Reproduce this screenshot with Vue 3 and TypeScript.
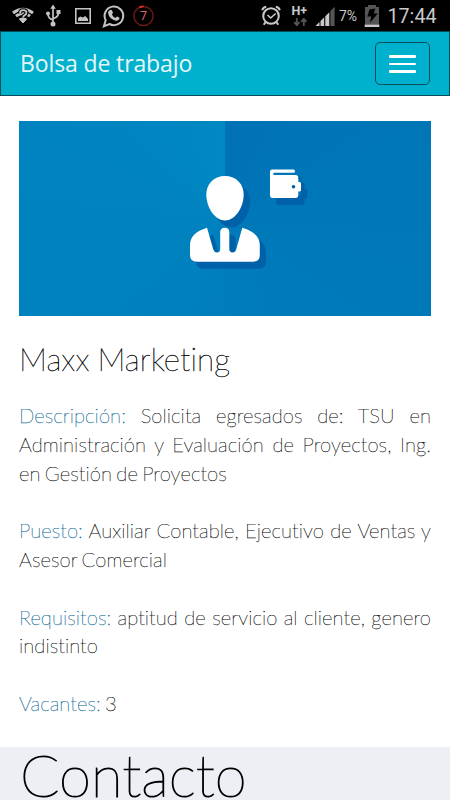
<script setup lang="ts">
interface Detail {
  label: string
  text: string
}

const details: Detail[] = [
  {
    label: 'Descripción:',
    text: 'Solicita egresados de: TSU en Administración y Evaluación de Proyectos, Ing. en Gestión de Proyectos',
  },
  { label: 'Puesto:', text: 'Auxiliar Contable, Ejecutivo de Ventas y Asesor Comercial' },
  { label: 'Requisitos:', text: 'aptitud de servicio al cliente, genero indistinto' },
  { label: 'Vacantes:', text: '3' },
]
</script>

<template>
  <div class="screen">
    <div class="status">
      <svg class="status-icons" width="160" height="31" viewBox="0 0 160 31" aria-hidden="true">
        <g fill="none" stroke="#c4c4c4">
          <path d="M13 13Q23 5.4 33 13" stroke-width="3" />
          <path d="M16 16.2Q23 10.6 30 16.2" stroke-width="3" />
          <path d="M19.3 19Q23 16 26.7 19L23 23Z" fill="#c4c4c4" stroke-width="1" />
          <path d="M20 13.4q0-3.2 3.2-3.2 3.3 0 3.3 2.6 0 1.6-2 2.6-1.4.7-1.4 2.2" stroke="#000" stroke-width="4" />
          <path d="M20 13.4q0-3.2 3.2-3.2 3.3 0 3.3 2.6 0 1.6-2 2.6-1.4.7-1.4 2.2" stroke-width="1.8" />
          <path d="M53 7v17M53 20q-5-1.6-5-6M53 18.5q5.5-1.2 5.5-6" stroke-width="1.7" />
          <path d="M75.8 8.8h14.4v14.4H75.8Z" stroke-width="1.6" />
          <path d="M103.9 26.2l1.8-6a9.3 9.3 0 1 1 3.8 3.8Z" stroke-width="2" />
        </g>
        <g fill="#c4c4c4">
          <path d="M53 4.5l2.8 4.2h-5.6Z" />
          <circle cx="53" cy="24" r="2.5" />
          <circle cx="48" cy="13.5" r="2" />
          <rect x="56.5" y="10" width="4" height="4" />
          <path d="M78 21v-3l2.5-1.6 2.3 1.2 2.5-1.5L88 19v2Z" />
          <path d="M109.5 10.3q1.8-1.5 2.8.7l.7 1.8-1.1 1.6q1.3 2.7 3.7 3.5l1.3-1.5q2.4.8 2.6 1.7-.5 2.8-3.7 2.6-6.8-1.7-7.8-7.9 0-1.4 1.5-2.5Z" />
        </g>
        <circle cx="143.5" cy="16" r="9.6" fill="none" stroke="#6b1717" stroke-width="1.5" />
        <path d="M139.3 7.4q2-1 4.2-1" fill="none" stroke="#ee2a26" stroke-width="1.8" />
        <text x="143.5" y="20.4" class="count">7</text>
      </svg>
      <svg class="status-icons" width="200" height="31" viewBox="250 0 200 31" aria-hidden="true">
        <g fill="none" stroke="#c9c9c9">
          <circle cx="271" cy="16" r="7.8" stroke-width="2" />
          <path d="M267.5 15l3.2 3 5-4.5" stroke-width="1.6" />
          <path d="M262.2 10.2q.6-2.7 4-3.4M275.8 6.8q3.4.7 4 3.4" stroke-width="2" />
          <path d="M265.5 22.2l-1.8 2.6M276.5 22.2l1.8 2.6" stroke-width="2" />
        </g>
        <text x="291.5" y="15" class="network">H+</text>
        <path d="M296.8 18v7M294.2 22.2l2.6 3 2.6-3M303.8 26v-7M301.2 21.8l2.6-3 2.6 3" fill="none" stroke="#555" stroke-width="1.8" />
        <g fill="#c9c9c9">
          <path d="M315.5 26l4-4v4Z" />
          <path d="M320.5 21l3.7-3.7V26h-3.7Z" />
          <path d="M325.3 16.2l4-4V26h-4Z" />
          <path d="M330.4 11l4.2-4.3V26h-4.2Z" fill="#555" />
        </g>
        <text x="339" y="21.3" class="percent">7%</text>
        <path d="M368 5h8v2h3v17.5h-14V7h3Z" fill="#555" />
        <path d="M364.7 24.5h14.6V27h-14.6Z" fill="#c9c9c9" />
        <path d="M369.5 9.5l5.8-1-1.5 5h4l-8 9.5 1.5-6.5h-4Z" fill="#000" />
        <text x="387.5" y="23" class="clock" textLength="49" lengthAdjust="spacingAndGlyphs">17:44</text>
      </svg>
    </div>

    <header class="navbar">
      <span class="brand">Bolsa de trabajo</span>
      <button class="toggle" type="button" aria-label="Menú">
        <span class="bar"></span>
        <span class="bar"></span>
        <span class="bar"></span>
      </button>
    </header>

    <main class="content">
      <svg class="banner-art" width="412" height="195" viewBox="19 121 412 195" aria-hidden="true">
        <defs>
          <g id="person">
            <path d="M225 176C236 176 244 184 243.7 195C243.3 208 235 220.5 225 220.5C215 220.5 206.7 208 206.3 195C206 184 214 176 225 176Z" />
            <path d="M207 227.8L213.3 249.5Q214.3 252.4 217 252.4Q220.2 252.4 220.2 249V232.2Q220.2 227.7 224.8 227.7Q229.3 227.7 229.3 232.2V249Q229.3 252.4 232.5 252.4Q235.3 252.4 236.2 249.5L242.3 227.8Q259.8 233 259.8 245V255Q259.8 261.7 253 261.7H197Q190 261.7 190 255V245Q190 233 207 227.8Z" />
          </g>
          <path id="wallet" fill-rule="evenodd" d="M272 169.6H293.5Q295 169.6 295 171.2Q295 172.8 293.5 172.8H274.3Q273.2 172.8 273.2 173.9Q273.2 175 274.3 175H296Q298.3 175 298.3 177.5V182H299.5Q301 182 301 183.5V190Q301 191.5 299.5 191.5H298.3V195.5Q298.3 197.9 296 197.9H272Q270 197.9 270 195.5V172Q270 169.6 272 169.6ZM293.5 185A1.8 1.8 0 1 0 293.5 188.6A1.8 1.8 0 1 0 293.5 185Z" />
        </defs>
        <use href="#person" x="6.2" y="7" fill="#0061a9" />
        <use href="#wallet" x="6.2" y="7" fill="#0061a9" />
        <use href="#person" fill="#fff" />
        <use href="#wallet" fill="#fff" />
      </svg>

      <h2 class="company">Maxx Marketing</h2>

      <p v-for="item in details" :key="item.label" class="detail">
        <span class="label">{{ item.label }}</span> {{ item.text }}
      </p>
    </main>

    <footer class="contact">
      <h1 class="contact-title">Contacto</h1>
    </footer>
  </div>
</template>

<style>
body {
  margin: 0;
  background: #fff;
}
</style>

<style scoped>
.screen {
  display: flex;
  flex-direction: column;
  width: 450px;
  height: 800px;
  overflow: hidden;
  background: #fff;
  font-family: Lato, sans-serif;
  font-weight: 200;
  font-variant-ligatures: none;
  color: #000;
}

.status {
  display: flex;
  flex: none;
  justify-content: space-between;
  height: 31px;
  background: #000;
}

.status-icons {
  display: block;
}

.status-icons text {
  font-family: Roboto, sans-serif;
  font-weight: 400;
  fill: #c9c9c9;
}

.status-icons .count {
  font-size: 12px;
  text-anchor: middle;
  fill: #e06a60;
}

.status-icons .network {
  font-size: 12.5px;
  font-weight: 700;
}

.status-icons .percent {
  font-size: 14px;
}

.status-icons .clock {
  font-size: 20.5px;
}

.navbar {
  display: flex;
  flex: none;
  align-items: center;
  justify-content: space-between;
  box-sizing: border-box;
  height: 65px;
  padding: 0 19px;
  border: 1px solid #084e59;
  background: #00b1cd;
}

.brand {
  padding-bottom: 2px;
  font-family: 'Open Sans', sans-serif;
  font-size: 23px;
  font-weight: 400;
  letter-spacing: -0.12px;
  line-height: 30px;
  color: #e8f5f8;
}

.toggle {
  display: flex;
  flex-direction: column;
  align-items: center;
  justify-content: center;
  gap: 5px;
  box-sizing: border-box;
  width: 55px;
  height: 43px;
  padding: 1px 0 0;
  border: 1px solid #084e59;
  border-radius: 5px;
  background: transparent;
}

.bar {
  width: 27px;
  height: 2.5px;
  border-radius: 1px;
  background: #fff;
}

.content {
  flex: none;
  box-sizing: border-box;
  height: 651px;
  padding: 25px 19px 0;
}

.banner-art {
  display: block;
  background: conic-gradient(from 0deg at 206px 98px, #0072b5, #0078b8 25%, #007bbb 45%, #0081be 60%, #0083c0 80%, #0089c3);
}

.company {
  margin: 23px 0 22px;
  font-size: 31.4px;
  font-weight: 200;
  line-height: 40px;
  letter-spacing: 0.08px;
  word-spacing: -1px;
  -webkit-text-stroke: 0.4px currentColor;
}

.detail {
  margin: 0 0 28.8px;
  font-size: 20.2px;
  line-height: 28.8px;
  text-align: justify;
  letter-spacing: 0.08px;
  word-spacing: -1.5px;
  -webkit-text-stroke: 0.25px currentColor;
}

.label {
  color: #005c8f;
}

.contact {
  flex: 1;
  padding: 0 20px;
  background: #eeeff4;
}

.contact-title {
  margin: -2px 0 0;
  font-size: 58px;
  font-weight: 200;
  line-height: 60px;
  -webkit-text-stroke: 1.1px currentColor;
}
</style>
